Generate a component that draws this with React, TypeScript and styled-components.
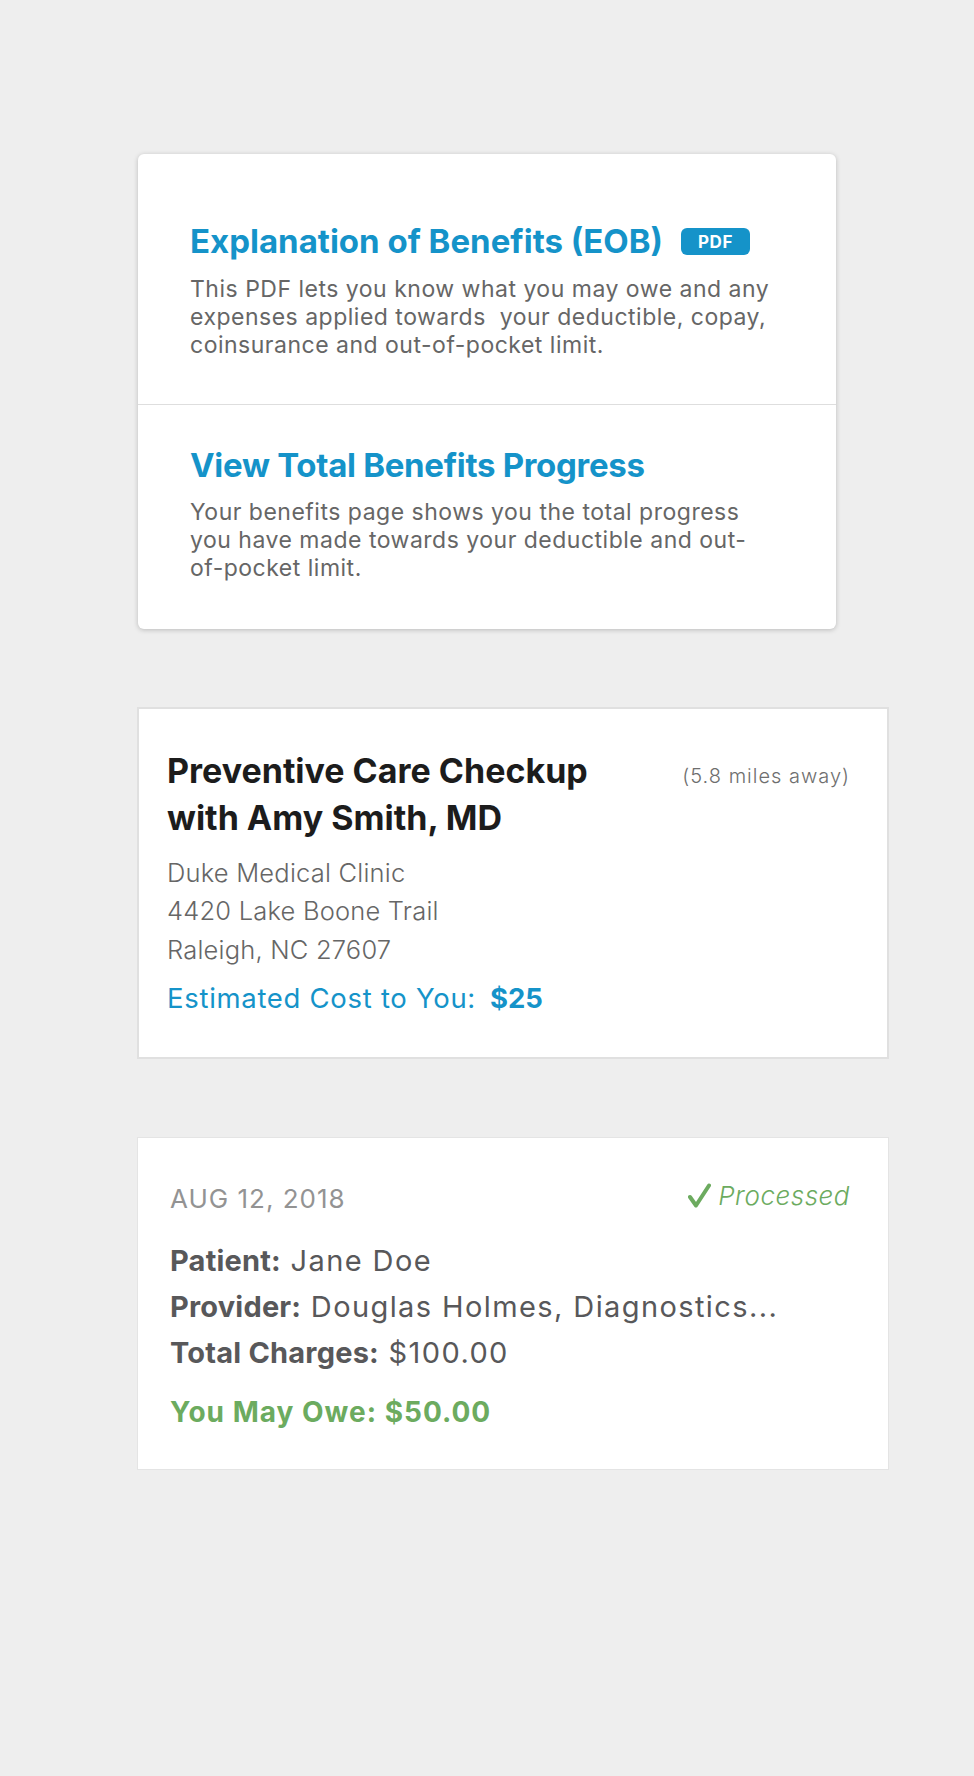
import React from "react";
import styled, { createGlobalStyle } from "styled-components";

const GlobalStyle = createGlobalStyle`
  html, body {
    margin: 0;
    padding: 0;
    background: #eeeeee;
  }
  body {
    font-family: Inter, "Liberation Sans", Arial, sans-serif;
    -webkit-font-smoothing: antialiased;
  }
  * { box-sizing: border-box; }
`;

const Page = styled.div`
  min-height: 1776px;
  background: #eeeeee;
  padding: 154px 0 0 137px;
  display: flex;
  flex-direction: column;
  align-items: flex-start;
`;

const BenefitsCard = styled.div`
  width: 698px;
  margin-left: 1px;
  background: #ffffff;
  border-radius: 6px;
  box-shadow: 0 1px 5px rgba(0, 0, 0, 0.22);
  display: flex;
  flex-direction: column;
`;

const BenefitSection = styled.div<{ $top: number; $bottom: number; $gap: number; $divider?: boolean }>`
  padding: ${(p) => p.$top}px 30px ${(p) => p.$bottom}px 52px;
  border-top: ${(p) => (p.$divider ? "1px solid #dedede" : "none")};
  display: flex;
  flex-direction: column;
  gap: ${(p) => p.$gap}px;
`;

const TitleRow = styled.div`
  display: flex;
  align-items: center;
  gap: 18px;
`;

const LinkTitle = styled.a<{ $spacing: number }>`
  font-size: 33px;
  line-height: 40px;
  font-weight: 700;
  color: #1593c9;
  text-decoration: none;
  letter-spacing: ${(p) => p.$spacing}px;
`;

const PdfBadge = styled.span`
  display: inline-flex;
  align-items: center;
  justify-content: center;
  width: 69px;
  height: 27px;
  border-radius: 6px;
  background: #1593c9;
  color: #ffffff;
  font-size: 17px;
  font-weight: 700;
  letter-spacing: 0.6px;
  margin-top: 1px;
`;

const BenefitText = styled.p`
  margin: 0;
  font-size: 23px;
  line-height: 28px;
  font-weight: 400;
  color: #666666;
  letter-spacing: 0.5px;
`;

const Spacer = styled.div<{ $h: number }>`
  height: ${(p) => p.$h}px;
  flex: none;
`;

const AppointmentCard = styled.div`
  width: 752px;
  background: #ffffff;
  border: 2px solid #e0e0e0;
  padding: 38px 37px 41px 28px;
  display: flex;
  flex-direction: column;
`;

const HeaderRow = styled.div`
  display: flex;
  align-items: baseline;
  justify-content: space-between;
`;

const AppointmentTitle = styled.h2`
  margin: 0;
  font-size: 34px;
  line-height: 47px;
  font-weight: 700;
  color: #1c1c1c;
  letter-spacing: 0;
`;

const Distance = styled.span`
  font-size: 20px;
  font-weight: 300;
  color: #6e6e6e;
  letter-spacing: 1px;
  white-space: nowrap;
`;

const Address = styled.div`
  margin-top: 13px;
  font-size: 25.5px;
  line-height: 38.3px;
  font-weight: 300;
  color: #666666;
  letter-spacing: 0.2px;
`;

const Cost = styled.div`
  margin-top: 11px;
  font-size: 27.5px;
  line-height: 36px;
  font-weight: 400;
  color: #1593c9;
  letter-spacing: 0.7px;
  strong {
    font-weight: 700;
    letter-spacing: 0;
    margin-left: 14px;
  }
`;

const ClaimCard = styled.div`
  width: 752px;
  background: #ffffff;
  border: 1px solid #e4e4e4;
  padding: 43px 38px 40px 32px;
  display: flex;
  flex-direction: column;
`;

const ClaimDate = styled.span`
  font-size: 26px;
  line-height: 30px;
  font-weight: 400;
  color: #939393;
  letter-spacing: 1px;
`;

const Status = styled.span`
  display: inline-flex;
  align-items: center;
  gap: 7px;
  font-size: 26px;
  line-height: 30px;
  font-weight: 300;
  font-style: italic;
  color: #6cab5f;
  letter-spacing: 0.5px;
`;

const ClaimDetails = styled.div`
  margin-top: 24px;
  display: flex;
  flex-direction: column;
`;

const DetailLine = styled.div`
  font-size: 29px;
  line-height: 45.8px;
  font-weight: 400;
  color: #58585a;
  letter-spacing: 1.4px;
  white-space: nowrap;
  overflow: hidden;
  text-overflow: ellipsis;
  b {
    font-weight: 700;
    letter-spacing: 0.2px;
  }
`;

const Owe = styled.div`
  margin-top: 19px;
  font-size: 28px;
  line-height: 34px;
  font-weight: 700;
  color: #6cab5f;
  letter-spacing: 1px;
`;

const CheckIcon = () => (
  <svg width="23" height="25" viewBox="0 0 23 25" aria-hidden="true">
    <path d="M2 14 L8 22.5 L21 2.5" fill="none" stroke="#6cab5f" strokeWidth="4" strokeLinecap="round" strokeLinejoin="round" />
  </svg>
);

export default function App() {
  return (
    <>
      <GlobalStyle />
      <Page>
        <BenefitsCard>
          <BenefitSection $top={67} $bottom={45} $gap={14}>
            <TitleRow>
              <LinkTitle href="#" $spacing={0}>
                Explanation of Benefits (EOB)
              </LinkTitle>
              <PdfBadge>PDF</PdfBadge>
            </TitleRow>
            <BenefitText>
              This PDF lets you know what you may owe and any
              <br />
              {"expenses applied towards\u00a0 your deductible, copay,"}
              <br />
              coinsurance and out-of-pocket limit.
            </BenefitText>
          </BenefitSection>
          <BenefitSection $top={40} $bottom={47} $gap={13} $divider>
            <TitleRow>
              <LinkTitle href="#" $spacing={-0.3}>
                View Total Benefits Progress
              </LinkTitle>
            </TitleRow>
            <BenefitText>
              Your benefits page shows you the total progress
              <br />
              you have made towards your deductible and out-
              <br />
              of-pocket limit.
            </BenefitText>
          </BenefitSection>
        </BenefitsCard>

        <Spacer $h={78} />

        <AppointmentCard>
          <HeaderRow>
            <AppointmentTitle>
              Preventive Care Checkup
              <br />
              with Amy Smith, MD
            </AppointmentTitle>
            <Distance>(5.8 miles away)</Distance>
          </HeaderRow>
          <Address>
            Duke Medical Clinic
            <br />
            4420 Lake Boone Trail
            <br />
            Raleigh, NC 27607
          </Address>
          <Cost>
            Estimated Cost to You:<strong>$25</strong>
          </Cost>
        </AppointmentCard>

        <Spacer $h={78} />

        <ClaimCard>
          <HeaderRow>
            <ClaimDate>AUG 12, 2018</ClaimDate>
            <Status>
              <CheckIcon />
              Processed
            </Status>
          </HeaderRow>
          <ClaimDetails>
            <DetailLine>
              <b>Patient:</b> Jane Doe
            </DetailLine>
            <DetailLine>
              <b>Provider:</b> Douglas Holmes, Diagnostics...
            </DetailLine>
            <DetailLine>
              <b>Total Charges:</b> $100.00
            </DetailLine>
          </ClaimDetails>
          <Owe>You May Owe: $50.00</Owe>
        </ClaimCard>
      </Page>
    </>
  );
}
